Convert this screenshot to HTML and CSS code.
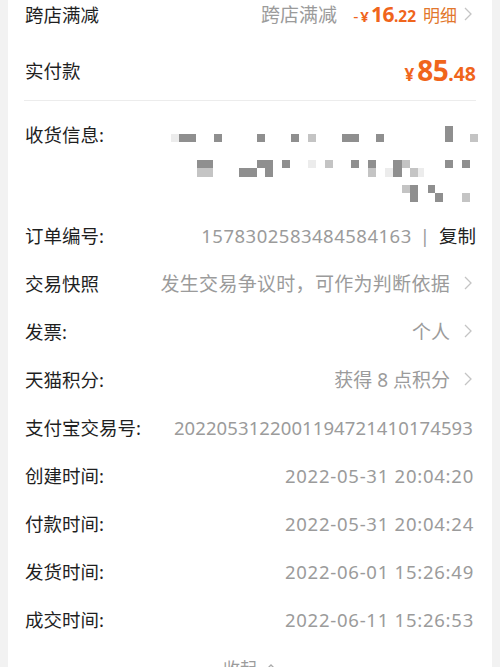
FILE: index.html
```html
<!DOCTYPE html>
<html lang="zh-CN">
<head>
<meta charset="utf-8">
<title>订单详情</title>
<link rel="stylesheet" href="styles.css">
</head>
<body>
<div class="card">
  <div class="row row-top">
    <span class="label">跨店满减</span>
    <span class="value">
      <span class="muted">跨店满减</span>
      <span class="discount"><span class="minus">-</span><span class="yen-s">¥</span><span class="d-int">16</span><span class="d-dec">.22</span></span>
      <span class="detail">明细</span>
      <svg class="chev" viewBox="0 0 8 14" width="8" height="14"><polyline points="1,1 7,7 1,13" fill="none" stroke="#c4c4c4" stroke-width="1.3"/></svg>
    </span>
  </div>
  <div class="row row-pay">
    <span class="label">实付款</span>
    <span class="price"><span class="p-yen">¥</span><span class="p-int">85</span><span class="p-dec">.48</span></span>
  </div>
  <div class="divider"></div>
  <div class="address">
    <span class="label">收货信息:</span>
    <svg class="mosaic" viewBox="166 130 310 75" width="310" height="75">
      <g fill="#8f8f8f">
        <rect x="179" y="134" width="17" height="8"/>
        <rect x="214" y="134" width="8" height="8"/>
        <rect x="257" y="134" width="8" height="8"/>
        <rect x="291" y="134" width="8" height="8"/>
        <rect x="342" y="134" width="17" height="8"/>
        <rect x="376" y="134" width="8" height="8"/>
        <rect x="445" y="126" width="8" height="16"/>
        <rect x="197" y="160" width="16" height="8"/>
        <rect x="257" y="160" width="8" height="8"/>
        <rect x="265" y="160" width="8" height="17"/>
        <rect x="239" y="168" width="18" height="9"/>
        <rect x="282" y="160" width="8" height="8"/>
        <rect x="351" y="160" width="8" height="8"/>
        <rect x="368" y="160" width="8" height="8"/>
        <rect x="393" y="160" width="9" height="17"/>
        <rect x="445" y="160" width="8" height="8"/>
        <rect x="462" y="160" width="8" height="8"/>
        <rect x="410" y="185" width="8" height="17"/>
        <rect x="428" y="185" width="7" height="8"/>
        <rect x="435" y="193" width="8" height="9"/>
      </g>
      <g fill="#c4c4c4">
        <rect x="308" y="134" width="8" height="8"/>
        <rect x="470" y="134" width="8" height="8"/>
        <rect x="197" y="168" width="16" height="9"/>
        <rect x="325" y="160" width="8" height="8"/>
        <rect x="368" y="168" width="8" height="9"/>
        <rect x="402" y="160" width="8" height="8"/>
        <rect x="410" y="168" width="8" height="9"/>
        <rect x="402" y="185" width="8" height="8"/>
        <rect x="462" y="193" width="8" height="9"/>
      </g>
      <g fill="#ececec">
        <rect x="171" y="134" width="8" height="8"/>
        <rect x="308" y="160" width="8" height="8"/>
        <rect x="385" y="168" width="8" height="9"/>
        <rect x="418" y="168" width="6" height="9"/>
      </g>
    </svg>
  </div>
  <div class="row">
    <span class="label">订单编号:</span>
    <span class="value"><span class="muted order-no">1578302583484584163</span><span class="sep">|</span><span class="copy">复制</span></span>
  </div>
  <div class="row">
    <span class="label">交易快照</span>
    <span class="value"><span class="muted wide">发生交易争议时，可作为判断依据</span>
      <svg class="chev" viewBox="0 0 8 14" width="8" height="14"><polyline points="1,1 7,7 1,13" fill="none" stroke="#c4c4c4" stroke-width="1.3"/></svg></span>
  </div>
  <div class="row">
    <span class="label">发票:</span>
    <span class="value"><span class="muted">个人</span>
      <svg class="chev" viewBox="0 0 8 14" width="8" height="14"><polyline points="1,1 7,7 1,13" fill="none" stroke="#c4c4c4" stroke-width="1.3"/></svg></span>
  </div>
  <div class="row">
    <span class="label">天猫积分:</span>
    <span class="value"><span class="muted">获得 8 点积分</span>
      <svg class="chev" viewBox="0 0 8 14" width="8" height="14"><polyline points="1,1 7,7 1,13" fill="none" stroke="#c4c4c4" stroke-width="1.3"/></svg></span>
  </div>
  <div class="row">
    <span class="label">支付宝交易号:</span>
    <span class="value"><span class="muted num">2022053122001194721410174593</span></span>
  </div>
  <div class="row">
    <span class="label">创建时间:</span>
    <span class="value"><span class="muted date">2022-05-31 20:04:20</span></span>
  </div>
  <div class="row">
    <span class="label">付款时间:</span>
    <span class="value"><span class="muted date">2022-05-31 20:04:24</span></span>
  </div>
  <div class="row">
    <span class="label">发货时间:</span>
    <span class="value"><span class="muted date">2022-06-01 15:26:49</span></span>
  </div>
  <div class="row">
    <span class="label">成交时间:</span>
    <span class="value"><span class="muted date">2022-06-11 15:26:53</span></span>
  </div>
  <div class="collapse">
    <span>收起</span>
    <svg viewBox="0 0 12 8" width="12" height="8"><polyline points="1,7 6,2 11,7" fill="none" stroke="#aaa" stroke-width="1.3"/></svg>
  </div>
</div>
</body>
</html>
```

FILE: styles.css
```css
html, body {
  margin: 0;
  padding: 0;
  background: #f2f2f2;
  overflow: hidden;
}

body {
  font-family: "Noto Sans", "Noto Sans CJK SC", sans-serif;
  color: #1f1f1f;
  font-size: 18.5px;
}

.card {
  background: #fff;
  margin: -10px 8px 0;
  padding: 0 16px;
}

.row {
  height: 48px;
  display: flex;
  align-items: center;
  justify-content: space-between;
  white-space: nowrap;
}

.label {
  color: #1f1f1f;
  padding-left: 1px;
}

.value {
  display: flex;
  align-items: center;
}

.muted {
  color: #9b9b9b;
  font-size: 19px;
}

.wide {
  letter-spacing: 0.3px;
}

.num {
  font-size: 18.5px;
  letter-spacing: 0.1px;
  margin-right: 3px;
}

.date {
  font-size: 18.5px;
  letter-spacing: 0.75px;
  margin-right: 2px;
}

.order-no {
  font-size: 18.5px;
  letter-spacing: 0.5px;
}

.sep {
  color: #9b9b9b;
  margin: 0 9px 0 8px;
}

.copy {
  color: #222;
}

.chev {
  margin-left: 14px;
  margin-right: 4px;
}

.discount {
  color: #f0651c;
  margin-left: 16px;
  display: flex;
  align-items: baseline;
}

.minus {
  font-size: 16px;
  margin-right: 2px;
}

.yen-s {
  font-size: 15px;
  font-weight: 700;
  margin-right: 2px;
}

.d-int {
  font-size: 21px;
  font-weight: 700;
  letter-spacing: -0.5px;
}

.d-dec {
  font-size: 15.5px;
  font-weight: 700;
}

.detail {
  color: #e2772c;
  font-size: 17px;
  margin-left: 7px;
}

.row-top .chev {
  margin-left: 7px;
}

.row-pay {
  margin-top: 8px;
  margin-bottom: 6px;
}

.price {
  color: #f0651c;
  display: flex;
  align-items: baseline;
  font-weight: 700;
}

.p-yen {
  font-size: 17px;
  margin-right: 3px;
}

.p-int {
  font-size: 28px;
  letter-spacing: -0.5px;
}

.p-dec {
  font-size: 19.5px;
}

.divider {
  height: 1px;
  background: #ececec;
}

.address {
  height: 110px;
  display: flex;
  justify-content: space-between;
  align-items: flex-start;
  box-sizing: border-box;
  padding-top: 20px;
}

.mosaic {
  overflow: visible;
  margin-top: 9px;
}

.collapse {
  height: 48px;
  display: flex;
  align-items: center;
  justify-content: center;
  gap: 8px;
  color: #9b9b9b;
  font-size: 17px;
}
```
